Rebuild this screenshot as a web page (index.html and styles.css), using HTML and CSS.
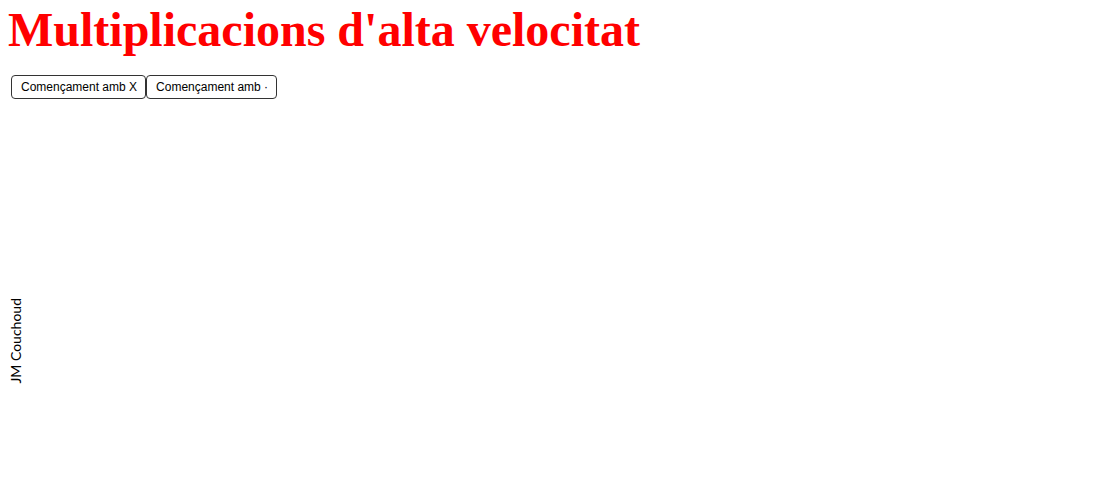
FILE: index.html
```html
<!DOCTYPE html>
<html>
<head>
<meta charset="utf-8">
<link rel="stylesheet" href="styles.css">
</head>
<body>
<h1 class="title">Multiplicacions d'alta velocitat</h1>
<div class="buttons">
  <button class="btn">Començament amb X</button><button class="btn">Començament amb ·</button>
</div>
<div class="author">JM Couchoud</div>
</body>
</html>
```
FILE: styles.css
```css
body {
  margin: 8px;
  background: #fff;
}
.title {
  font-family: "Liberation Serif", serif;
  font-weight: bold;
  color: #ff0000;
  font-size: 48px;
  line-height: 44px;
  margin: 0;
}
.buttons {
  display: flex;
  margin: 23px 0 0 3px;
}
.btn {
  font-family: "Liberation Sans", Arial, sans-serif;
  font-size: 12px;
  background: #fff;
  color: #000;
  border: 1px solid #333;
  border-radius: 4px;
  height: 24px;
  padding: 0 8px 0 9px;
  margin: 0;
}
.author {
  font-family: Lato, sans-serif;
  font-size: 14px;
  writing-mode: vertical-rl;
  transform: rotate(180deg);
  margin: 199px 0 0 -1px;
}
```
